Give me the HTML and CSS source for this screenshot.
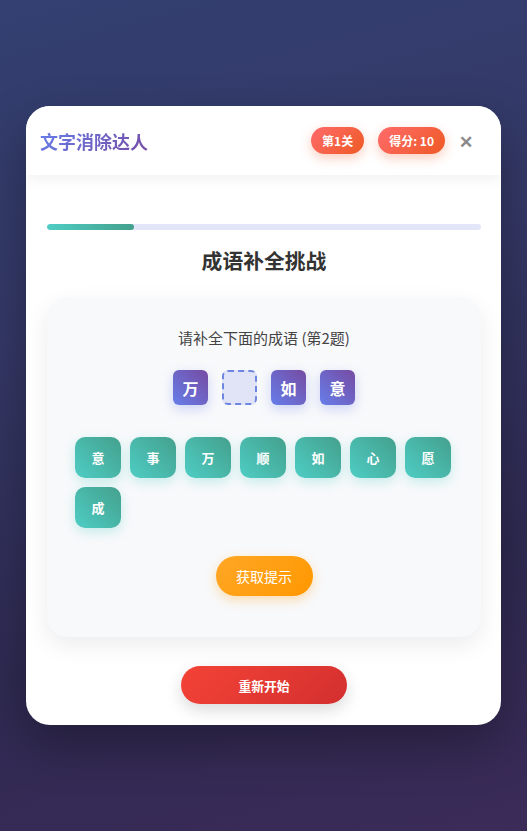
FILE: index.html
```html
<!DOCTYPE html>
<html lang="zh">
<head>
<meta charset="utf-8">
<title>文字消除达人</title>
<link rel="stylesheet" href="styles.css">
</head>
<body>
<div class="card">
  <header class="header">
    <h1 class="app-title">文字消除达人</h1>
    <div class="header-right">
      <span class="badge">第1关</span>
      <span class="badge">得分: 10</span>
      <span class="close">✕</span>
    </div>
  </header>
  <main class="content">
    <div class="progress"><div class="progress-fill" style="width: 20%"></div></div>
    <h2 class="game-title">成语补全挑战</h2>
    <section class="panel">
      <p class="prompt">请补全下面的成语 (第2题)</p>
      <div class="slots">
        <span class="slot">万</span>
        <span class="slot empty"></span>
        <span class="slot">如</span>
        <span class="slot">意</span>
      </div>
      <div class="options">
        <span class="opt">意</span>
        <span class="opt">事</span>
        <span class="opt">万</span>
        <span class="opt">顺</span>
        <span class="opt">如</span>
        <span class="opt">心</span>
        <span class="opt">愿</span>
        <span class="opt">成</span>
      </div>
      <div class="hint-row"><button class="hint">获取提示</button></div>
    </section>
    <div class="restart-row"><button class="restart">重新开始</button></div>
  </main>
</div>
</body>
</html>
```

FILE: styles.css
```css
* { box-sizing: border-box; }
html, body { margin: 0; padding: 0; }
body {
  height: 831px;
  display: flex;
  align-items: center;
  justify-content: center;
  font-family: "Noto Sans CJK SC", "Noto Sans", sans-serif;
  background: linear-gradient(165deg, #334071 0%, #343866 35%, #2f2a52 70%, #3b2b58 100%);
}
.card {
  width: 475px;
  height: 619px;
  background: #fff;
  border-radius: 24px;
  overflow: hidden;
  box-shadow: 0 20px 50px rgba(0,0,0,0.3);
  display: flex;
  flex-direction: column;
}
.header {
  height: 69px;
  flex: none;
  display: flex;
  align-items: center;
  justify-content: space-between;
  padding: 0 28px 0 14px;
  background: #fff;
  box-shadow: 0 4px 14px rgba(0,0,0,0.06);
  position: relative;
  z-index: 1;
}
.app-title {
  margin: 0;
  font-size: 18px;
  font-weight: 700;
  background: linear-gradient(135deg, #667eea, #764ba2);
  -webkit-background-clip: text;
  background-clip: text;
  color: transparent;
}
.header-right {
  display: flex;
  align-items: center;
  gap: 14px;
}
.badge {
  height: 27px;
  line-height: 27px;
  padding: 0 11px;
  border-radius: 14px;
  color: #fff;
  font-size: 12px;
  font-weight: 700;
  background: linear-gradient(135deg, #ff6b6b, #ee5a24);
  box-shadow: 0 4px 12px rgba(238,90,36,0.3);
}
.close {
  color: #8a8a8a;
  font-size: 17px;
  font-weight: 700;
  width: 14px;
  text-align: center;
}
.content {
  flex: 1;
  padding: 49px 20px 20px 21px;
  display: flex;
  flex-direction: column;
}
.progress {
  height: 6px;
  border-radius: 3px;
  background: #e2e6f8;
  overflow: hidden;
}
.progress-fill {
  height: 100%;
  border-radius: 3px;
  background: linear-gradient(90deg, #4ecdc4, #44a08d);
}
.game-title {
  margin: 16px 0 0;
  text-align: center;
  font-size: 20.8px;
  line-height: 28px;
  font-weight: 700;
  color: #333;
}
.panel {
  margin-top: 24px;
  background: #f8f9fb;
  border-radius: 20px;
  padding: 30px 28px 41px;
  box-shadow: 0 8px 24px rgba(0,0,0,0.08);
}
.prompt {
  margin: 0;
  text-align: center;
  font-size: 15px;
  line-height: 20px;
  color: #444;
}
.slots {
  margin-top: 22px;
  display: flex;
  justify-content: center;
  gap: 14px;
}
.slot {
  width: 35px;
  height: 35px;
  border-radius: 6px;
  display: flex;
  align-items: center;
  justify-content: center;
  color: #fff;
  font-size: 16px;
  font-weight: 700;
  background: linear-gradient(45deg, #667eea, #764ba2);
  box-shadow: 0 4px 12px rgba(102,126,234,0.3);
}
.slot.empty {
  background: #e0e4f6;
  border: 2px dashed #6f86e0;
  box-shadow: none;
}
.options {
  margin-top: 32px;
  display: flex;
  flex-wrap: wrap;
  gap: 9px;
}
.opt {
  width: 46px;
  height: 41px;
  border-radius: 10px;
  display: flex;
  align-items: center;
  justify-content: center;
  color: #fff;
  font-size: 13px;
  font-weight: 700;
  background: linear-gradient(45deg, #4ecdc4, #44a08d);
  box-shadow: 0 4px 12px rgba(78,205,196,0.3);
}
.hint-row {
  margin-top: 28px;
  display: flex;
  justify-content: center;
}
.hint {
  width: 97px;
  height: 40px;
  border: none;
  border-radius: 20px;
  color: #fff;
  font-family: inherit;
  font-size: 14px;
  background: linear-gradient(135deg, #ffa726, #ff9800);
  box-shadow: 0 4px 12px rgba(255,167,38,0.35);
  padding: 0;
}
.restart-row {
  margin-top: 29px;
  display: flex;
  justify-content: center;
}
.restart {
  width: 166px;
  height: 38px;
  border: none;
  border-radius: 19px;
  color: #fff;
  font-family: inherit;
  font-size: 12.8px;
  font-weight: 700;
  background: linear-gradient(135deg, #f44336, #d32f2f);
  box-shadow: 0 6px 16px rgba(0,0,0,0.15);
  padding: 0;
}
```
